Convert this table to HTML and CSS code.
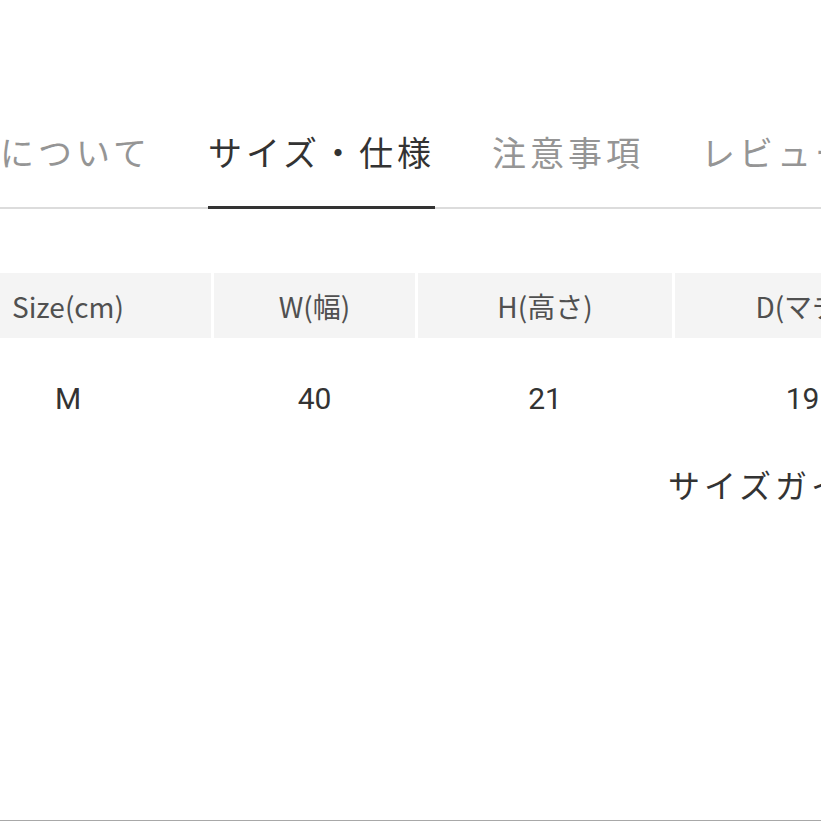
FILE: index.html
```html
<!DOCTYPE html>
<html lang="ja">
<head>
<meta charset="utf-8">
<link rel="stylesheet" href="styles.css">
</head>
<body>
<div class="page">
  <nav class="tabs">
    <div class="tab">について</div>
    <div class="tab active">サイズ・仕様</div>
    <div class="tab">注意事項</div>
    <div class="tab">レビュー</div>
  </nav>
  <div class="table">
    <div class="row head">
      <div class="cell c1">Size(cm)</div>
      <div class="cell c2">W(幅)</div>
      <div class="cell c3">H(高さ)</div>
      <div class="cell c4">D(マチ)</div>
    </div>
    <div class="row body">
      <div class="cell c1">M</div>
      <div class="cell c2">40</div>
      <div class="cell c3">21</div>
      <div class="cell c4">19</div>
    </div>
  </div>
  <div class="guide">
    <span class="guide-link">サイズガイド</span>
  </div>
  <div class="spacer"></div>
  <div class="bottom-line"></div>
</div>
</body>
</html>
```
FILE: styles.css
```css
html, body {
  margin: 0;
  padding: 0;
  background: #fff;
  overflow: hidden;
}
body {
  width: 821px;
  height: 821px;
  font-family: "Noto Sans CJK JP", "Noto Sans", sans-serif;
}
.page {
  width: 821px;
  height: 821px;
  display: flex;
  flex-direction: column;
  overflow: hidden;
}
.tabs {
  margin-top: 122px;
  display: flex;
  gap: 57px;
  border-bottom: 2px solid #dcdcdc;
  white-space: nowrap;
  padding-left: 0;
}
.tab {
  flex: none;
  font-size: 34px;
  letter-spacing: 4px;
  line-height: 60px;
  padding-bottom: 24px;
  color: #959595;
  margin-bottom: -2px;
  border-bottom: 3px solid transparent;
}
.tab.active {
  color: #333;
  border-bottom-color: #333;
}
.table {
  margin-top: 64px;
  width: 1000px;
  margin-left: -75px;
}
.row {
  display: flex;
  gap: 3px;
}
.cell {
  flex: none;
  display: flex;
  align-items: center;
  justify-content: center;
  white-space: nowrap;
}
.c1 { width: 286px; }
.c2 { width: 201px; }
.c3 { width: 254px; }
.c4 { width: 255px; }
.head .cell {
  height: 65px;
  background: #f4f4f4;
  color: #505050;
  font-size: 28px;
  font-weight: 400;
}
.body .cell {
  height: 120px;
  color: #333;
  font-size: 30px;
  font-family: "Roboto", "Noto Sans CJK JP", sans-serif;
}
.guide {
  display: flex;
  justify-content: flex-start;
  padding-left: 668px;
  padding-top: 4px;
  white-space: nowrap;
}
.guide-link {
  font-size: 32px;
  letter-spacing: 4px;
  color: #333;
  line-height: 44px;
}
.spacer {
  flex: 1;
}
.bottom-line {
  height: 1px;
  background: #a8a8a8;
}
```
